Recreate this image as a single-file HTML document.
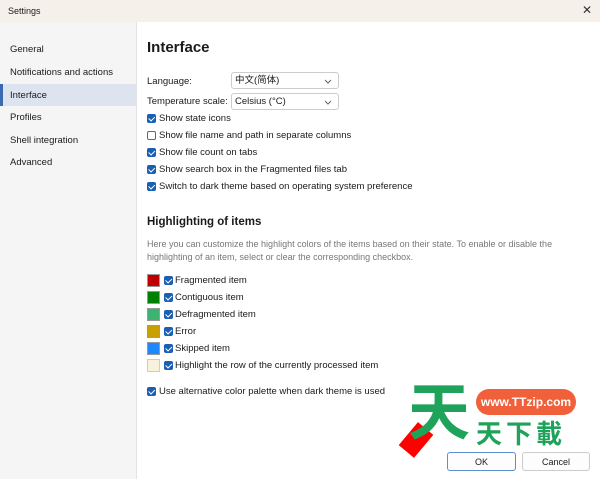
<!DOCTYPE html>
<html><head><style>
*{margin:0;padding:0;box-sizing:border-box}
body{width:600px;height:479px;overflow:hidden;font-family:"Liberation Sans","Noto Sans CJK SC",sans-serif;font-size:9.5px;color:#1a1a1a;background:#fff;position:relative}
.title{position:absolute;left:0;top:0;width:600px;height:22px;background:#f6f0eb;font-size:9px;padding:6px 8px}
.close{position:absolute;right:8px;top:3px;font-size:12px;color:#333}
.side{position:absolute;left:0;top:22px;width:137px;height:457px;background:#f5f5f5;border-right:1px solid #e4e4e4}
.side div{position:absolute;left:10px;font-size:9.5px}
.side .sel{position:absolute;left:0;top:62px;width:136px;height:22px;background:#dde4ef;border-left:3px solid #3a6ab0}
.a{position:absolute;white-space:nowrap}
.cb{position:absolute;width:9px;height:9px;border-radius:2px;background:#1a5fb4}
.cb::after{content:"";position:absolute;left:2.5px;top:1px;width:2.5px;height:4.5px;border:solid #fff;border-width:0 1.3px 1.3px 0;transform:rotate(45deg)}
.cb.off{background:#fff;border:1px solid #666}.cb.off::after{display:none}
.dd{position:absolute;left:231px;width:108px;height:17px;border:1px solid #ccc;border-radius:3px;padding:0 3px;line-height:15px;font-size:9.5px}
.dd svg{position:absolute;right:6px;top:6px}
.sw{position:absolute;left:147px;width:13px;height:13px;border:1px solid #999}
.btn{position:absolute;top:452px;height:19px;border:1px solid #ccc;border-radius:3px;background:#fdfdfd;text-align:center;padding-top:4px;font-size:9px}
</style></head><body>
<div class="title">Settings<span class="close">✕</span></div>
<div class="side">
<div class="sel"></div>
<div style="top:22px">General</div>
<div style="top:45px">Notifications and actions</div>
<div style="top:68px">Interface</div>
<div style="top:90px">Profiles</div>
<div style="top:113px">Shell integration</div>
<div style="top:135px">Advanced</div>
</div>
<div class="a" style="left:147px;top:39px;font-size:15px;font-weight:bold">Interface</div>
<div class="a" style="left:147px;top:76px">Language:</div>
<div class="dd" style="top:72px">中文(简体)<svg width="8" height="5"><path d="M1 1L4 4L7 1" stroke="#666" fill="none"/></svg></div>
<div class="a" style="left:147px;top:96px">Temperature scale:</div>
<div class="dd" style="top:93px">Celsius (°C)<svg width="8" height="5"><path d="M1 1L4 4L7 1" stroke="#666" fill="none"/></svg></div>
<div class="cb" style="left:147px;top:114px"></div><div class="a" style="left:159px;top:113px">Show state icons</div>
<div class="cb off" style="left:147px;top:131px"></div><div class="a" style="left:159px;top:130px">Show file name and path in separate columns</div>
<div class="cb" style="left:147px;top:148px"></div><div class="a" style="left:159px;top:147px">Show file count on tabs</div>
<div class="cb" style="left:147px;top:165px"></div><div class="a" style="left:159px;top:164px">Show search box in the Fragmented files tab</div>
<div class="cb" style="left:147px;top:182px"></div><div class="a" style="left:159px;top:181px">Switch to dark theme based on operating system preference</div>
<div class="a" style="left:147px;top:216px;font-size:11.5px;font-weight:bold">Highlighting of items</div>
<div class="a" style="left:147px;top:238px;color:#777;font-size:9px;line-height:12.5px;white-space:normal;width:450px">Here you can customize the highlight colors of the items based on their state. To enable or disable the highlighting of an item, select or clear the corresponding checkbox.</div>
<div class="sw" style="top:274px;background:#c00000"></div><div class="cb" style="left:164px;top:276px"></div><div class="a" style="left:175px;top:275px">Fragmented item</div>
<div class="sw" style="top:291px;background:#008000"></div><div class="cb" style="left:164px;top:293px"></div><div class="a" style="left:175px;top:292px">Contiguous item</div>
<div class="sw" style="top:308px;background:#3cb371"></div><div class="cb" style="left:164px;top:310px"></div><div class="a" style="left:175px;top:309px">Defragmented item</div>
<div class="sw" style="top:325px;background:#c8a000"></div><div class="cb" style="left:164px;top:327px"></div><div class="a" style="left:175px;top:326px">Error</div>
<div class="sw" style="top:342px;background:#1e88ff"></div><div class="cb" style="left:164px;top:344px"></div><div class="a" style="left:175px;top:343px">Skipped item</div>
<div class="sw" style="top:359px;background:#f8f2dc;border-color:#ccc"></div><div class="cb" style="left:164px;top:361px"></div><div class="a" style="left:175px;top:360px">Highlight the row of the currently processed item</div>
<div class="cb" style="left:147px;top:387px"></div><div class="a" style="left:159px;top:386px">Use alternative color palette when dark theme is used</div>
<div class="btn" style="left:447px;width:69px;border-color:#5b8fd0">OK</div>
<div class="btn" style="left:522px;width:68px">Cancel</div>
<div class="a" style="left:406px;top:380px;width:20px;height:30px;background:#f00;transform:rotate(40deg);top:425px"></div>
<div class="a" style="left:408px;top:376px;font-size:62px;font-weight:bold;color:#1fa35a;font-family:'Noto Sans CJK SC',sans-serif;line-height:62px">天</div>
<div class="a" style="left:476px;top:389px;width:100px;height:26px;border-radius:13px;background:#f0603a;color:#fff;font-weight:bold;font-size:12px;text-align:center;padding-top:6px">www.TTzip.com</div>
<div class="a" style="left:476px;top:418px;font-size:26px;font-weight:bold;color:#1fa35a;font-family:'Noto Sans CJK SC',sans-serif;letter-spacing:4px;line-height:30px">天下載</div>
</body></html>
